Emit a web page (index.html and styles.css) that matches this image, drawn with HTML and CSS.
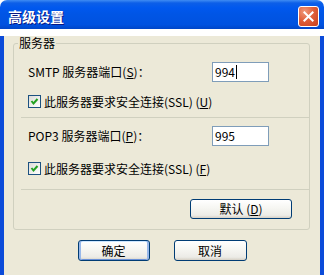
FILE: index.html
```html
<!DOCTYPE html>
<html lang="zh-CN">
<head>
    <meta charset="UTF-8">
    <meta name="viewport" content="width=device-width, initial-scale=1.0">
    <title>高级设置</title>
    <link rel="stylesheet" href="styles.css">
</head>
<body>
    <div class="window">
        <div class="titlebar">
            <span class="title">高级设置</span>
            <span class="close">
                <svg width="21" height="21" viewBox="0 0 21 21">
                    <path d="M6 6 L15 15 M15 6 L6 15" stroke="#fff" stroke-width="2.2" stroke-linecap="square"/>
                </svg>
            </span>
        </div>

        <div class="client">
            <fieldset class="group">
                <legend>服务器</legend>

                <div class="port-row">
                    <label>SMTP 服务器端口(<u>S</u>)：</label>
                    <div class="field">994<span class="caret"></span></div>
                </div>
                <div class="check-row">
                    <span class="check">
                        <svg width="11" height="11" viewBox="0 0 11 11">
                            <path d="M2.5 5 L4.5 7.5 L8.5 3" fill="none" stroke="#21a121" stroke-width="2"/>
                        </svg>
                    </span>
                    <span>此服务器要求安全连接(SSL) (<u>U</u>)</span>
                </div>

                <div class="sep"></div>

                <div class="port-row pop">
                    <label>POP3 服务器端口(<u>P</u>)：</label>
                    <div class="field">995</div>
                </div>
                <div class="check-row second">
                    <span class="check">
                        <svg width="11" height="11" viewBox="0 0 11 11">
                            <path d="M2.5 5 L4.5 7.5 L8.5 3" fill="none" stroke="#21a121" stroke-width="2"/>
                        </svg>
                    </span>
                    <span>此服务器要求安全连接(SSL) (<u>F</u>)</span>
                </div>

                <div class="sep last"></div>

                <div class="default-row">
                    <button class="btn btn-wide">默认 (<u>D</u>)</button>
                </div>
            </fieldset>

            <div class="actions">
                <button class="btn btn-primary">确定</button>
                <button class="btn">取消</button>
            </div>
        </div>
    </div>
</body>
</html>
```

FILE: styles.css
```css
:root {
    --face: #ece9d8;
    --frame: #0b4bd9;
    --group-line: #d0d0bf;
    --btn-border: #003c74;
    --field-border: #7f9db9;
}

body {
    margin: 0;
    background: #fff;
    font-family: "Noto Sans CJK SC", "Noto Sans", sans-serif;
    font-size: 12px;
    line-height: 14px;
    color: #000;
}

.window {
    width: 324px;
    height: 275px;
}

/* XP style caption */
.titlebar {
    height: 29px;
    display: flex;
    align-items: center;
    justify-content: space-between;
    padding: 0 5px 0 8px;
    box-sizing: border-box;
    border-radius: 7px 7px 0 0;
    background: linear-gradient(to bottom, #3f8cf3 0, #0c5fe8 3px, #0058ee 8px, #0055e5 50%, #0052e0 85%, #0046c8 100%);
}

.title {
    color: #fff;
    font-size: 14px;
    font-weight: bold;
    line-height: 16px;
    padding-top: 2px;
    text-shadow: 1px 1px 0 #0a1883;
}

.close {
    width: 21px;
    height: 21px;
    margin-top: 4px;
    box-sizing: border-box;
    border: 1px solid #fff;
    border-radius: 3px;
    background: radial-gradient(circle at 30% 25%, #f09a7c 0, #e0603a 45%, #c8401c 100%);
    display: flex;
    align-items: center;
    justify-content: center;
}

.close svg {
    display: block;
}

.client {
    height: 242px;
    background: var(--face);
    border: 4px solid var(--frame);
    border-top: none;
}

.group {
    margin: 7px 10px 0 9px;
    padding: 0 17px 10px 14px;
    border: 1px solid var(--group-line);
    border-radius: 3px;
}

.group legend {
    margin-left: -10px;
    padding: 0 1px;
}

.port-row {
    display: flex;
    align-items: center;
    height: 20px;
    margin-top: 12px;
}

.port-row.pop {
    margin-top: 8px;
}

.port-row label {
    width: 184px;
}

.field {
    width: 57px;
    height: 20px;
    box-sizing: border-box;
    border: 1px solid var(--field-border);
    background: #fff;
    padding-left: 2px;
    line-height: 18px;
    display: flex;
    align-items: center;
}

.caret {
    display: inline-block;
    width: 1px;
    height: 14px;
    background: #000;
    margin-left: 1px;
}

.check-row {
    display: flex;
    align-items: center;
    gap: 3px;
    height: 13px;
    margin-top: 13px;
}

.check-row.second {
    margin-top: 16px;
}

.check {
    width: 13px;
    height: 13px;
    box-sizing: border-box;
    border: 1px solid #1c5180;
    background: linear-gradient(135deg, #dcdcd7, #fff);
}

.check svg {
    display: block;
}

.sep {
    margin: 9px -17px 0 -7px;
    border-top: 1px solid var(--group-line);
}

.sep.last {
    margin-top: 14px;
}

.default-row {
    display: flex;
    justify-content: flex-end;
    margin-top: 9px;
}

.btn {
    font-family: inherit;
    font-size: 12px;
    line-height: 14px;
    color: #000;
    width: 73px;
    height: 21px;
    padding: 0;
    border: 1px solid var(--btn-border);
    border-radius: 3px;
    background: linear-gradient(to bottom, #fff 0%, #f6f6f2 45%, #ecebe6 85%, #d6d0c5 100%);
}

.btn-wide {
    width: 102px;
    height: 20px;
}

.btn-primary {
    width: 72px;
    box-shadow: inset 2px 0 0 #98b8ea, inset -2px 0 0 #98b8ea, inset 0 1px 0 #cee7ff, inset 0 -1px 0 #6990d8;
}

.actions {
    display: flex;
    justify-content: center;
    gap: 24px;
    margin-top: 10px;
}
```
